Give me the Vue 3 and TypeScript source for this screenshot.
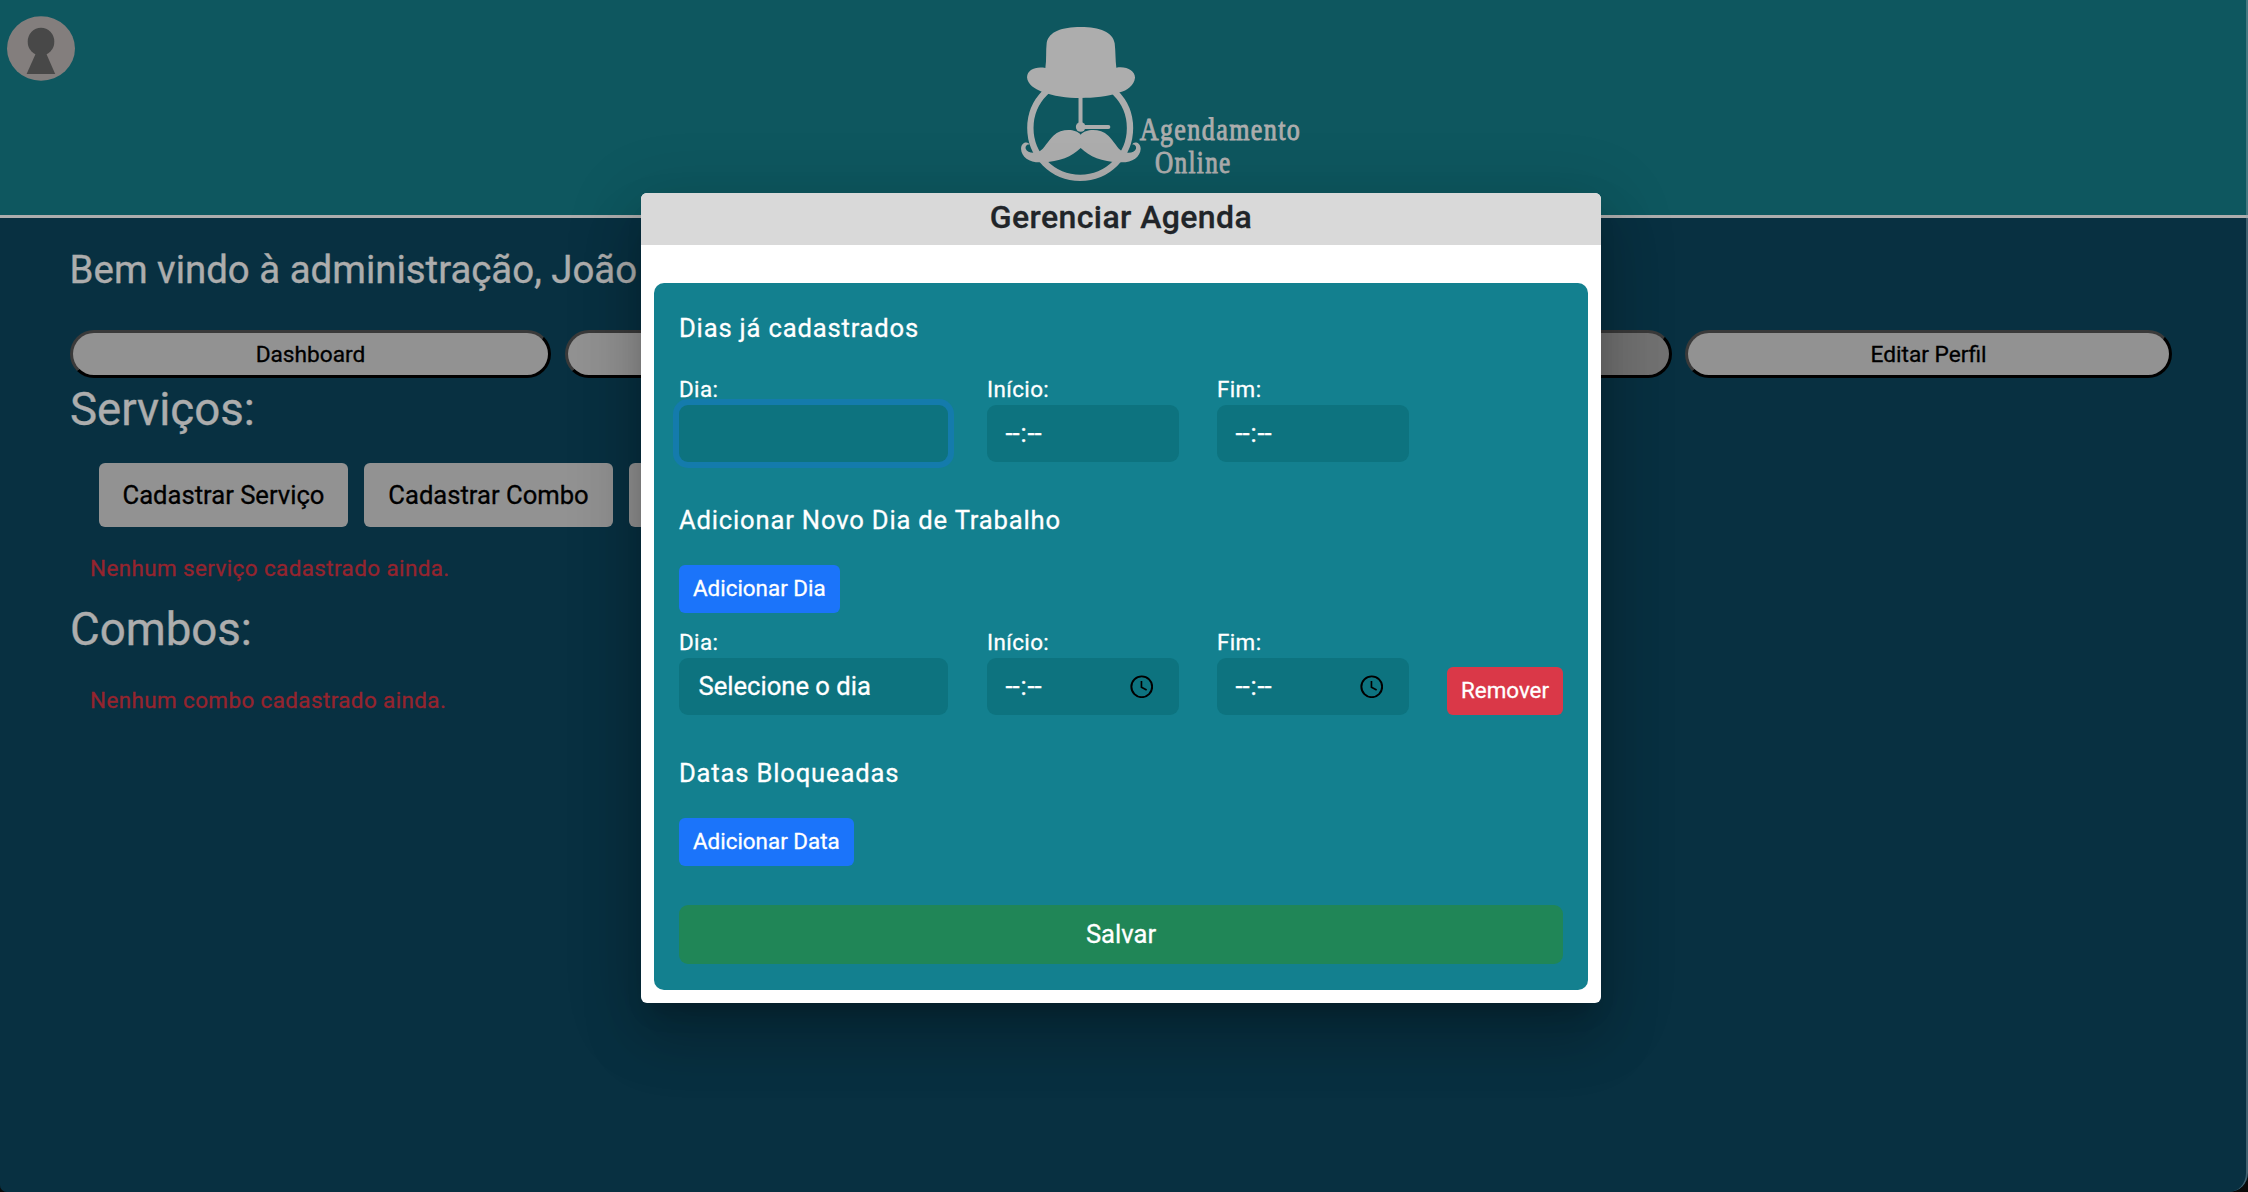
<script setup lang="ts">
import { ref } from 'vue'

interface NavItem {
  id: number
  label: string
  active?: boolean
}

const user = ref('João')
const nav: NavItem[] = [
  { id: 1, label: 'Dashboard' },
  { id: 2, label: '' },
  { id: 3, label: '', active: true },
  { id: 4, label: 'Editar Perfil' },
]
const actions: string[] = ['Cadastrar Serviço', 'Cadastrar Combo', '']
const times: string[] = ['Início:', 'Fim:']
</script>

<template>
  <div class="page">
    <header class="top">
      <svg class="avatar" viewBox="0 0 68 65" preserveAspectRatio="none">
        <ellipse cx="34" cy="32.5" rx="34" ry="32.3" fill="#c1bab8" />
        <ellipse cx="34" cy="25.7" rx="13.3" ry="14" fill="#6a6a6a" />
        <path d="M29 37 H39 L48.2 58 H19.6 Z" fill="#6a6a6a" />
      </svg>
      <svg class="logo" viewBox="120 60 900 484">
        <circle cx="300.5" cy="384" r="149.5" fill="none" stroke="#fff" stroke-width="19" />
        <path
          fill="#fff"
          d="M196 204C200 180 197 152 200 128C207 95 245 81 302 81C360 81 398 96 404 130C407 155 406 180 409 203C440 198 465 212 465 233C463 255 440 272 420 277C385 290 340 294 302 294C260 294 220 288 185 275C165 268 142 253 141 232C142 210 165 199 196 204Z"
        />
        <path d="M301.500 290V381H385" fill="none" stroke="#fff" stroke-width="12" stroke-linecap="round" />
        <circle cx="302" cy="381" r="14.500" fill="#fff" />
        <path
          fill="#fff"
          d="M302 404C287 386 245 384 220 407C202 424 194 445 177 455C160 461 141 458 137 446C135 438 142 432 148 434C146 424 124 424 123 446C124 472 150 489 185 487C240 485 275 470 302 444C329 470 364 485 419 487C455 489 481 472 482 446C481 424 459 424 457 434C463 432 470 438 468 446C464 458 446 461 428 455C411 445 403 424 385 407C360 384 317 386 302 404Z"
        />
        <text x="479" y="421" class="brand" textLength="485" lengthAdjust="spacingAndGlyphs">Agendamento</text>
        <text x="525" y="519" class="brand" textLength="230" lengthAdjust="spacingAndGlyphs">Online</text>
      </svg>
    </header>

    <main class="content">
      <h1 class="welcome">Bem vindo à administração, {{ user }}</h1>
      <nav class="nav">
        <button v-for="item in nav" :key="item.id" class="pill" :class="{ active: item.active }">
          {{ item.label }}
        </button>
      </nav>
      <h2 class="section">Serviços:</h2>
      <div class="actions">
        <button v-for="a in actions" :key="a" class="card-btn">{{ a }}</button>
      </div>
      <p class="empty">Nenhum serviço cadastrado ainda.</p>
      <h2 class="section second">Combos:</h2>
      <p class="empty last">Nenhum combo cadastrado ainda.</p>
    </main>

    <div class="backdrop">
      <div class="dialog">
        <div class="dialog-title">Gerenciar Agenda</div>
        <div class="panel">
          <h3>Dias já cadastrados</h3>
          <div class="row">
            <div class="field day">
              <label>Dia:</label>
              <div class="input focused"></div>
            </div>
            <div v-for="t in times" :key="t" class="field time">
              <label>{{ t }}</label>
              <div class="input clock"><span>--<i>:</i>--</span></div>
            </div>
          </div>

          <h3 class="next">Adicionar Novo Dia de Trabalho</h3>
          <button class="btn blue">Adicionar Dia</button>
          <div class="row new">
            <div class="field day">
              <label>Dia:</label>
              <div class="input select">Selecione o dia</div>
            </div>
            <div v-for="t in times" :key="t" class="field time">
              <label>{{ t }}</label>
              <div class="input clock">
                <span>--<i>:</i>--</span>
                <svg class="clock-icon" viewBox="0 0 24 24">
                  <circle cx="12" cy="12" r="10.600" fill="none" stroke="#000" stroke-width="2" />
                  <path d="M11.700 6.200V12.400L17 15.300" fill="none" stroke="#000" stroke-width="1.700" />
                </svg>
              </div>
            </div>
            <button class="btn red">Remover</button>
          </div>

          <h3 class="next">Datas Bloqueadas</h3>
          <button class="btn blue">Adicionar Data</button>
          <button class="save">Salvar</button>
        </div>
      </div>
    </div>
    <div class="frame"></div>
  </div>
</template>

<style>
body {
  margin: 0;
  background: #0a0a0a;
}
</style>

<style scoped>
* {
  box-sizing: border-box;
}
.page {
  position: relative;
  width: 2248px;
  height: 1192px;
  overflow: hidden;
  border-radius: 0 0 19px 7px;
  background: #0c4860;
  font-family: Roboto, sans-serif;
  color: #fff;
  -webkit-text-stroke-width: 0.3px;
}
h1,
h2,
h3,
p {
  margin: 0;
  font-weight: 400;
}
button {
  font-family: inherit;
  padding: 0;
  margin: 0;
}
.top {
  display: flex;
  align-items: flex-start;
  height: 218px;
  padding-left: 7px;
  background: #15818d;
  border-bottom: 3px solid #fff;
}
.avatar {
  width: 68px;
  height: 65px;
  margin-top: 16px;
}
.logo {
  width: 300px;
  height: 161.300px;
  margin-top: 20px;
  margin-left: 945px;
  overflow: visible;
}
.brand {
  font-family: 'Liberation Serif', serif;
  font-size: 93px;
  letter-spacing: 5px;
  fill: #fff;
  stroke: #fff;
  stroke-width: 2.5px;
}
.content {
  padding: 28px 76px 0 70px;
}
.welcome {
  font-size: 38.4px;
  line-height: 48px;
  margin-left: -0.400px;
}
.nav {
  display: grid;
  grid-template-columns: 481px 1fr 1fr 487px;
  gap: 13.500px;
  margin-top: 36px;
}
.pill {
  height: 48px;
  border: 3px solid;
  border-color: #565656 #000 #000 #565656;
  border-radius: 24px;
  background: #d7d7d7;
  color: #000;
  font-size: 22.7px;
}
.pill.active {
  background: #a9a9a9;
}
.section {
  font-size: 45.6px;
  line-height: 54px;
  margin-top: 5px;
}
.actions {
  display: flex;
  gap: 16px;
  margin: 26px 0 0 29px;
}
.card-btn {
  width: 249px;
  height: 64px;
  border: 0;
  border-radius: 6px;
  background: #d7d7d7;
  color: #000;
  font-size: 25.6px;
}
.empty {
  margin: 26px 0 0 20px;
  font-size: 22.4px;
  line-height: 30px;
  letter-spacing: 0.42px;
  color: #dc3545;
}
.section.second {
  margin-top: 20px;
}
.empty.last {
  margin-top: 28px;
}
.backdrop {
  position: absolute;
  inset: 0;
  display: flex;
  justify-content: center;
  align-items: flex-start;
  padding: 193px 6px 0 0;
  background: rgba(0, 0, 0, 0.32);
}
.dialog {
  width: 960px;
  height: 810px;
  border-radius: 6px;
  background: #fff;
  box-shadow:
    0 17px 23px -11px rgba(0, 0, 0, 0.2),
    0 37px 58px 5px rgba(0, 0, 0, 0.14),
    0 14px 70px 12px rgba(0, 0, 0, 0.12);
}
.dialog-title {
  height: 52px;
  border-radius: 6px 6px 0 0;
  background: #d9d9d9;
  color: #212529;
  text-align: center;
  font-size: 32px;
  font-weight: 500;
  line-height: 49px;
  letter-spacing: 0.4px;
}
.panel {
  display: flex;
  flex-direction: column;
  align-items: flex-start;
  height: 707px;
  margin: 38px 13px 0;
  padding: 27px 25px 0;
  border-radius: 10px;
  background: #13808f;
}
h3 {
  font-size: 25.6px;
  line-height: 36px;
  letter-spacing: 0.82px;
}
h3.next {
  margin-top: 40px;
}
.row {
  display: flex;
  align-items: flex-end;
  gap: 38px;
  width: 100%;
  margin-top: 28px;
}
.row.new {
  margin-top: 14px;
}
.field {
  display: flex;
  flex-direction: column;
}
.day {
  width: 269px;
}
.field.day {
  margin-right: 1px;
}
.time {
  width: 192px;
}
label {
  font-size: 22.4px;
  line-height: 31px;
  letter-spacing: 0.4px;
}
.input {
  display: flex;
  align-items: center;
  height: 57px;
  padding: 0 26px 0 19.500px;
  border-radius: 9px;
  background: #0d737f;
  font-size: 25.6px;
}
.input.select {
  padding-bottom: 2px;
}
.input.clock {
  justify-content: space-between;
  padding-left: 18.500px;
}
.input.clock span {
  padding-bottom: 2px;
}
.input.focused {
  box-shadow: 0 0 0 6px #147bac;
}
.clock i {
  font-style: normal;
  margin: 0 0.800px;
}
.clock-icon {
  width: 23.500px;
  height: 23.500px;
}
.btn {
  height: 48px;
  padding: 0 14px 2px;
  border: 0;
  border-radius: 6px;
  color: #fff;
  font-size: 22.4px;
}
.blue {
  margin-top: 27px;
  background: #1b74fa;
}
.red {
  width: 116px;
  background: #da3848;
}
.save {
  width: 100%;
  height: 59px;
  margin-top: 39px;
  padding-bottom: 2px;
  border: 0;
  border-radius: 9px;
  background: #208657;
  color: #fff;
  font-size: 25.6px;
}
.row .red {
  margin-left: auto;
}
.frame {
  position: absolute;
  inset: 0;
  border-right: 2px solid rgba(150, 170, 180, 0.4);
  border-radius: 0 0 19px 7px;
}
</style>
